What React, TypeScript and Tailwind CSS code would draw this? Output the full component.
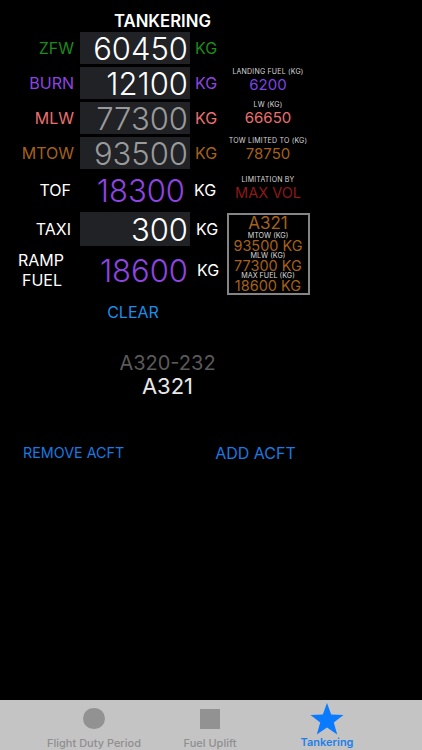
const font = { fontFamily: "Inter, 'Liberation Sans', sans-serif" };

function Row({ label, value, color, valueColor, unitColor, box, h, mt, labelPr = 'pr-[6px]', valuePr = 'pr-[2px]', unitMl = 'ml-[5px]', bg = 'bg-[#202226]' }: { label: string; value: string; color: string; valueColor: string; unitColor: string; box?: boolean; h: string; mt: string; labelPr?: string; valuePr?: string; unitMl?: string; bg?: string }) {
  return (
    <div className={`flex items-center ${h} ${mt}`}>
      <div className={`w-[80px] text-right text-[16px] leading-none ${labelPr} ${color}`}>{label}</div>
      <div className={`w-[110px] h-full flex items-center justify-end text-[31px] font-light leading-none ${valuePr} ${valueColor} ${box ? bg : ''}`}>{value}</div>
      <div className={`text-[16px] leading-none ${unitMl} ${unitColor}`}>KG</div>
    </div>
  );
}

function Stat({ label, value, color, mt, size = 'text-[15px]' }: { label: string; value: string; color: string; mt: string; size?: string }) {
  return (
    <div className={`flex flex-col items-center ${mt}`}>
      <div className="text-[7px] leading-[10px] text-[#d8d8d8] tracking-[0.2px] whitespace-nowrap">{label}</div>
      <div className={`${size} leading-[15px] whitespace-nowrap ${color}`}>{value}</div>
    </div>
  );
}

export default function App() {
  return (
    <div className="w-[422px] h-[750px] bg-black flex flex-col overflow-hidden" style={font}>
      <div className="flex-1 min-h-0 flex flex-col">
        <div className="flex">
          <div className="w-[225px] flex flex-col">
            <div className="h-[32px] pt-[12px] pl-[114px] text-[16.7px] leading-[18px] font-semibold text-white whitespace-nowrap">TANKERING</div>
            <Row label="ZFW" value="60450" color="text-[#1d8a1d]" valueColor="text-white" unitColor="text-[#1d8a1d]" box h="h-[32px]" mt="mt-0" />
            <Row label="BURN" value="12100" color="text-[#8e44e0]" valueColor="text-white" unitColor="text-[#8e44e0]" box h="h-[32px]" mt="mt-[3px]" />
            <Row label="MLW" value="77300" color="text-[#e87070]" valueColor="text-[#9a9a9a]" unitColor="text-[#e87070]" box h="h-[32px]" mt="mt-[3px]" />
            <Row label="MTOW" value="93500" color="text-[#a5611c]" valueColor="text-[#9a9a9a]" unitColor="text-[#a5611c]" box h="h-[32px]" mt="mt-[3px]" />
            <Row label="TOF" value="18300" color="text-white" valueColor="text-[#8e44e0]" unitColor="text-white" h="h-[34px]" mt="mt-[4px]" labelPr="pr-[9px]" valuePr="pr-[5px]" unitMl="ml-[4px]" />
            <Row label="TAXI" value="300" color="text-white" valueColor="text-white" unitColor="text-white" box h="h-[34px]" mt="mt-[5px]" labelPr="pr-[9px]" unitMl="ml-[6px]" />
            <div className="flex items-center h-[40px] mt-[4px]">
              <div className="w-[80px] pl-[18px] text-[16px] leading-[20px] text-white">
                <div>RAMP</div>
                <div className="pl-[4px]">FUEL</div>
              </div>
              <div className="w-[108px] flex justify-end text-[31px] font-light leading-none text-[#8e44e0]">18600</div>
              <div className="text-[16px] leading-none ml-[9px] text-white">KG</div>
            </div>
          </div>
          <div className="w-[90px] ml-[-2px] flex flex-col items-center pt-[67px]">
            <Stat label="LANDING FUEL (KG)" value="6200" color="text-[#7a45e0]" mt="mt-0" />
            <Stat label="LW (KG)" value="66650" color="text-[#e87070]" mt="mt-[8px]" />
            <Stat label="TOW LIMITED TO (KG)" value="78750" color="text-[#a5611c]" mt="mt-[11px]" />
            <Stat label="LIMITATION BY" value="MAX VOL" color="text-[#8c1a1a]" mt="mt-[14px]" size="text-[14.5px]" />
            <div className="mt-[13px] w-[83px] h-[82px] border-2 border-[#858585] flex flex-col items-center text-[#a5611c]">
              <div className="text-[17px] leading-[16px]">A321</div>
              <div className="text-[7.2px] leading-[8px] text-[#d8d8d8] mt-[1px] whitespace-nowrap">MTOW (KG)</div>
              <div className="text-[14.5px] leading-[12px] whitespace-nowrap">93500 KG</div>
              <div className="text-[7.2px] leading-[8px] text-[#d8d8d8] whitespace-nowrap">MLW (KG)</div>
              <div className="text-[14.5px] leading-[12px] whitespace-nowrap">77300 KG</div>
              <div className="text-[7.2px] leading-[8px] text-[#d8d8d8] whitespace-nowrap">MAX FUEL (KG)</div>
              <div className="text-[14.5px] leading-[12px] whitespace-nowrap">18600 KG</div>
            </div>
          </div>
        </div>
        <div className="w-[266px] text-center mt-[7px] text-[16px] leading-[20px] text-[#1a8fe8]">CLEAR</div>
        <div className="w-[335px] mt-[30px] flex flex-col items-center">
          <div className="text-[20px] leading-[22px] text-[#5a5a5a]">A320-232</div>
          <div className="text-[22px] leading-[26px] text-[#e8e8e8] -mt-[1px]">A321</div>
        </div>
        <div className="flex mt-[44px] text-[#1a7ae0] whitespace-nowrap items-center">
          <div className="ml-[23px] text-[14.3px] leading-[20px]">REMOVE ACFT</div>
          <div className="ml-[91px] text-[16px] leading-[20px]">ADD ACFT</div>
        </div>
      </div>
      <div className="h-[50px] bg-[#c4c4c4] relative flex">
        <div className="w-[188px] flex flex-col items-center text-[#8f8f8f]">
          <div className="w-[22px] h-[22px] rounded-full bg-[#929292] mt-[8px]" />
          <div className="text-[11px] leading-[13px] font-medium mt-[8px] whitespace-nowrap">Flight Duty Period</div>
        </div>
        <div className="w-[44px] flex flex-col items-center text-[#8f8f8f]">
          <div className="w-[20px] h-[20px] bg-[#929292] mt-[9px]" />
          <div className="text-[11px] leading-[13px] font-medium mt-[8px] whitespace-nowrap">Fuel Uplift</div>
        </div>
        <div className="ml-[50px] w-[90px] flex flex-col items-center text-[#1f7fe8]">
          <svg width="34" height="32" viewBox="0 0 34 32" className="mt-[3px]">
            <path d="M17 0 L21.2 11.6 L33.5 12 L23.8 19.6 L27.2 31.5 L17 24.6 L6.8 31.5 L10.2 19.6 L0.5 12 L12.8 11.6 Z" fill="#0a7aff" />
          </svg>
          <div className="text-[11px] leading-[13px] font-semibold mt-[1px] whitespace-nowrap">Tankering</div>
        </div>
      </div>
    </div>
  );
}
